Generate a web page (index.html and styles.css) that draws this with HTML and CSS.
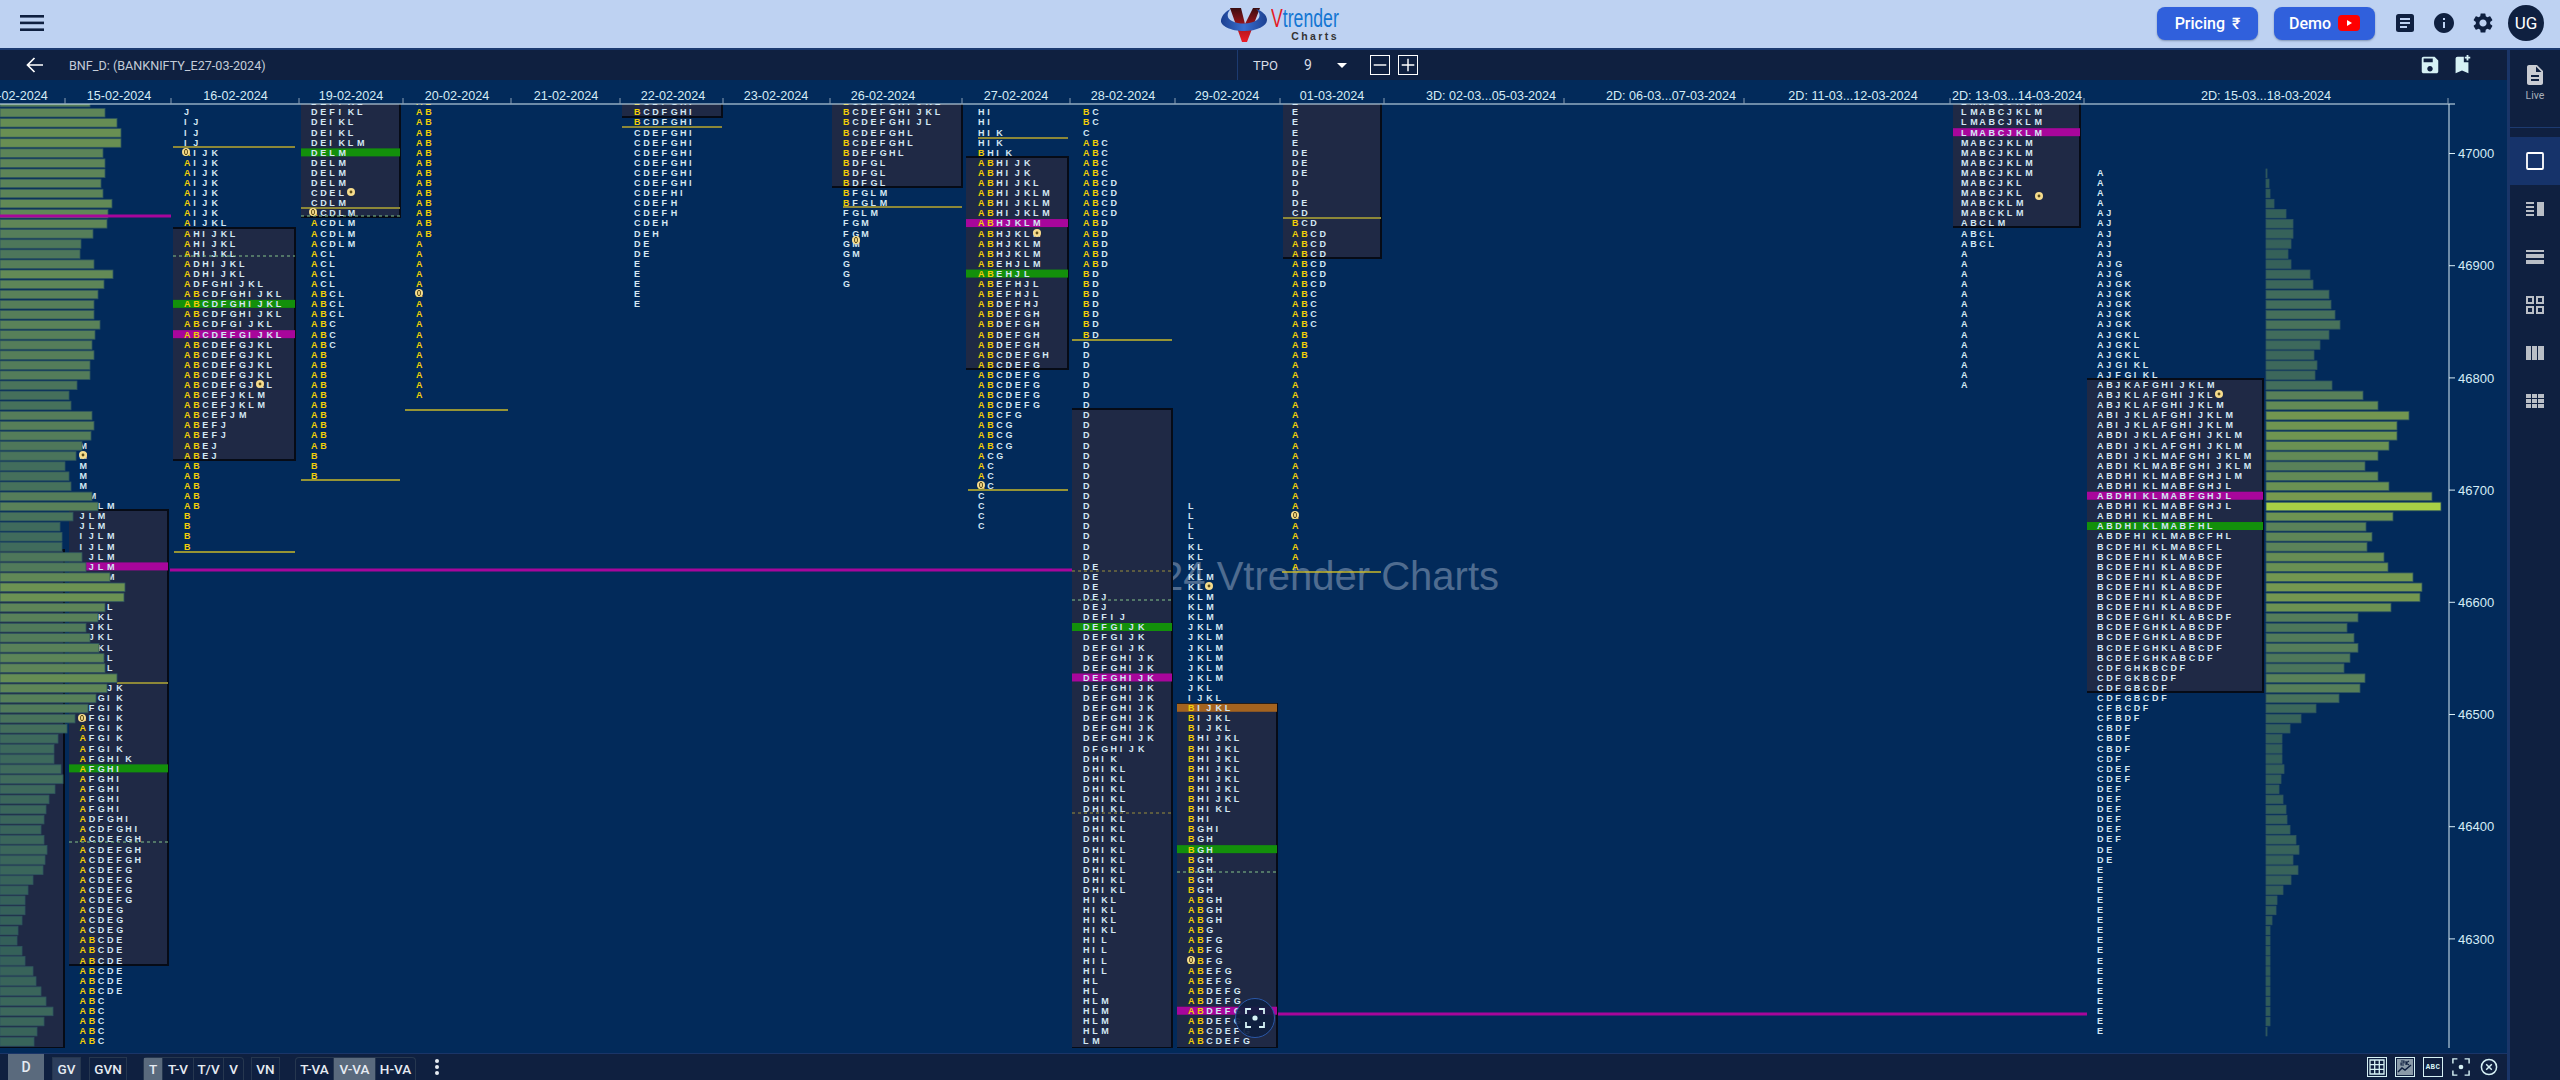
FILE: index.html
```html
<!DOCTYPE html>
<html lang="en">
<head>
<meta charset="utf-8">
<title>Vtrender Charts</title>
<link rel="stylesheet" href="styles.css">
</head>
<body>
<header class="topbar">
  <button class="burger" aria-label="Menu">
    <svg width="24" height="16" viewBox="0 0 24 16"><rect width="24" height="2.6" fill="#0f2040"/><rect y="6.6" width="24" height="2.6" fill="#0f2040"/><rect y="13.4" width="24" height="2.6" fill="#0f2040"/></svg>
  </button>
  <div class="logo">
    <svg class="logo-mark" width="50" height="38" viewBox="0 0 50 38">
      <defs>
        <linearGradient id="vg" x1="0" y1="0" x2="0" y2="1"><stop offset="0" stop-color="#3a0d10"/><stop offset="0.55" stop-color="#a8161c"/><stop offset="1" stop-color="#ee1c25"/></linearGradient>
        <linearGradient id="sg" x1="0" y1="0" x2="1" y2="0"><stop offset="0" stop-color="#1b3f90"/><stop offset="0.5" stop-color="#3a6fd0"/><stop offset="1" stop-color="#1b3f90"/></linearGradient>
      </defs>
      <path d="M10 2h11l4 16 8-16h7L27 36h-5z" fill="url(#vg)"/>
      <path d="M1 14C2 9 6 5 11 3 6 7 7 13 12 15c8 4 20 3 25-1 4-3 3-8-1-11 6 2 11 6 11 11 0 6-10 11-23 11S0 20 1 14z" fill="url(#sg)"/>
    </svg>
    <div class="logo-text">
      <div class="logo-name"><span class="logo-v">V</span>trender</div>
      <div class="logo-sub">Charts</div>
    </div>
  </div>
  <div class="top-actions">
    <button class="cta">Pricing <span class="rupee">₹</span></button>
    <button class="cta">Demo
      <svg width="22" height="16" viewBox="0 0 22 16"><rect width="22" height="16" rx="4" fill="#f00"/><path d="M9 5l5 3-5 3z" fill="#fff"/></svg>
    </button>
    <svg class="top-icon doc-icon" width="18" height="18" viewBox="0 0 18 18"><rect width="18" height="18" rx="2.5" fill="#0f2040"/><path d="M4 5h10M4 9h10M4 13h7" stroke="#bed2f2" stroke-width="1.8"/></svg>
    <svg class="top-icon" width="24" height="24" viewBox="0 0 24 24"><path fill="#0f2040" d="M12 2C6.48 2 2 6.48 2 12s4.48 10 10 10 10-4.48 10-10S17.52 2 12 2zm1 15h-2v-6h2v6zm0-8h-2V7h2v2z"/></svg>
    <svg class="top-icon" width="24" height="24" viewBox="0 0 24 24"><path fill="#0f2040" d="M19.14 12.94c.04-.3.06-.61.06-.94 0-.32-.02-.64-.07-.94l2.03-1.58a.49.49 0 0 0 .12-.61l-1.92-3.32a.488.488 0 0 0-.59-.22l-2.39.96c-.5-.38-1.03-.7-1.62-.94l-.36-2.54a.484.484 0 0 0-.48-.41h-3.84c-.24 0-.43.17-.47.41l-.36 2.54c-.59.24-1.13.57-1.62.94l-2.39-.96c-.22-.08-.47 0-.59.22L2.74 8.87c-.12.21-.08.47.12.61l2.03 1.58c-.05.3-.09.63-.09.94s.02.64.07.94l-2.03 1.58a.49.49 0 0 0-.12.61l1.92 3.32c.12.22.37.29.59.22l2.39-.96c.5.38 1.03.7 1.62.94l.36 2.54c.05.24.24.41.48.41h3.84c.24 0 .44-.17.47-.41l.36-2.54c.59-.24 1.13-.56 1.62-.94l2.39.96c.22.08.47 0 .59-.22l1.92-3.32c.12-.22.07-.47-.12-.61l-2.01-1.58zM12 15.6c-1.98 0-3.6-1.62-3.6-3.6s1.62-3.6 3.6-3.6 3.6 1.62 3.6 3.6-1.62 3.6-3.6 3.6z"/></svg>
    <div class="avatar">UG</div>
  </div>
</header>

<div class="workspace">
  <div class="chart-col">
    <div class="subbar">
      <div class="sub-left">
        <svg class="back" width="18" height="16" viewBox="0 0 18 16"><path d="M8.5 1L1.5 8l7 7M2 8h15" fill="none" stroke="#fff" stroke-width="1.7"/></svg>
        <span class="sym">BNF_D: (BANKNIFTY_E27-03-2024)</span>
      </div>
      <div class="sub-mid">
        <span class="tpo-label">TPO</span>
        <span class="tpo-val">9</span>
        <span class="caret"></span>
        <span class="sq-btn">
          <svg width="20" height="20" viewBox="0 0 20 20"><path d="M3 10h14" stroke="#fff" stroke-width="1.6"/></svg>
        </span>
        <span class="sq-btn">
          <svg width="20" height="20" viewBox="0 0 20 20"><path d="M3 10h14M10 3v14" stroke="#fff" stroke-width="1.6"/></svg>
        </span>
      </div>
      <div class="sub-right">
        <svg width="22" height="22" viewBox="0 0 24 24"><path fill="#d6f1f5" d="M17 3H5c-1.11 0-2 .9-2 2v14c0 1.1.89 2 2 2h14c1.1 0 2-.9 2-2V7l-4-4zm-5 16c-1.66 0-3-1.34-3-3s1.34-3 3-3 3 1.34 3 3-1.34 3-3 3zm3-10H5V5h10v4z"/></svg>
        <svg width="22" height="22" viewBox="0 0 24 24"><path fill="#d6f1f5" d="M5 5a2 2 0 0 1 2-2h7v6h5v12l-7-3-7 3zM19 1v2h2v2h-2v2h-2V5h-2V3h2V1z"/></svg>
      </div>
    </div>

    <div class="chart-wrap">
      <svg id="chart" class="chart" viewBox="0 80 2507 973" width="2507" height="973"></svg>
      <button class="fab" aria-label="Focus">
        <svg width="20" height="20" viewBox="0 0 20 20"><path d="M1 6V1h5M14 1h5v5M19 14v5h-5M6 19H1v-5" fill="none" stroke="#d6f1f5" stroke-width="1.8"/><circle cx="10" cy="10" r="2.6" fill="#d6f1f5"/></svg>
      </button>
    </div>

    <footer class="toolbar">
      <button class="tb tb-d">D</button>
      <button class="tb tb-gv">GV</button>
      <button class="tb tb-gvn">GVN</button>
      <div class="tb-group">
        <button class="seg seg-t on">T</button>
        <button class="seg seg-tv">T-V</button>
        <button class="seg seg-tsv">T/V</button>
        <button class="seg seg-v">V</button>
      </div>
      <button class="tb tb-vn">VN</button>
      <div class="tb-group tb-group-va">
        <button class="seg seg-va">T-VA</button>
        <button class="seg seg-vva on">V-VA</button>
        <button class="seg seg-hva">H-VA</button>
      </div>
      <svg class="dots" width="6" height="18" viewBox="0 0 6 18"><circle cx="3" cy="3" r="2"/><circle cx="3" cy="9" r="2"/><circle cx="3" cy="15" r="2"/></svg>
      <div class="tb-right">
        <span class="tool-box"><svg width="16" height="16" viewBox="0 0 16 16"><path d="M1 1h14v14H1zM1 5.7h14M1 10.3h14M5.7 1v14M10.3 1v14" fill="none" stroke="#d6f1f5" stroke-width="1.3"/></svg></span>
        <span class="tool-box"><svg width="16" height="16" viewBox="0 0 16 16"><rect width="16" height="16" fill="#8a9aa8"/><path d="M1 13l4-4 3 2 6-5" fill="none" stroke="#0f2040" stroke-width="1.5"/><path d="M4 2h3v2H4v2h3M9 2v4M12 2l-3 2 3 2" fill="none" stroke="#0f2040" stroke-width="1.1"/></svg></span>
        <span class="tool-box abc">ABC</span>
        <svg class="tool-plain" width="18" height="18" viewBox="0 0 20 20"><path d="M1 6V1h5M14 1h5v5M19 14v5h-5M6 19H1v-5" fill="none" stroke="#d6f1f5" stroke-width="1.6"/><circle cx="10" cy="10" r="2.6" fill="#d6f1f5"/></svg>
        <svg class="tool-plain" width="18" height="18" viewBox="0 0 18 18"><circle cx="9" cy="9" r="7.6" fill="none" stroke="#d6f1f5" stroke-width="1.5"/><path d="M6.2 6.2l5.6 5.6M11.8 6.2l-5.6 5.6" stroke="#d6f1f5" stroke-width="1.5"/></svg>
      </div>
    </footer>
  </div>

  <aside class="side">
    <div class="side-live">
      <svg width="24" height="24" viewBox="0 0 24 24"><path fill="#c9ccd3" d="M14 2H6c-1.1 0-1.99.9-1.99 2L4 20c0 1.1.89 2 1.99 2H18c1.1 0 2-.9 2-2V8l-6-6zm2 16H8v-2h8v2zm0-4H8v-2h8v2zm-3-5V3.5L18.5 9H13z"/></svg>
      <span>Live</span>
    </div>
    <div class="side-item selected"><svg width="18" height="18" viewBox="0 0 18 18"><rect x="1" y="1" width="16" height="16" rx="1" fill="none" stroke="#fff" stroke-width="1.8"/></svg></div>
    <div class="side-item"><svg width="18" height="14" viewBox="0 0 18 14"><path fill="#b9bec6" d="M0 0h8v2H0zM0 4h8v2H0zM0 8h8v2H0zM0 12h8v2H0zM11 0h7v14h-7z"/></svg></div>
    <div class="side-item"><svg width="18" height="14" viewBox="0 0 18 14"><path fill="#b9bec6" d="M0 0h18v2H0zM0 4h18v4H0zM0 10h18v4H0z"/></svg></div>
    <div class="side-item"><svg width="18" height="18" viewBox="0 0 18 18"><path fill="none" stroke="#b9bec6" stroke-width="2" d="M1 1h6v6H1zM11 1h6v6h-6zM1 11h6v6H1zM11 11h6v6h-6z"/></svg></div>
    <div class="side-item"><svg width="18" height="14" viewBox="0 0 18 14"><path fill="#b9bec6" d="M0 0h5v14H0zM6 0h5v14H6zM12 0h6v14h-6z"/></svg></div>
    <div class="side-item"><svg width="18" height="14" viewBox="0 0 18 14"><path fill="#b9bec6" d="M0 0h5v4H0zM6 0h5v4H6zM12 0h6v4h-6zM0 5h5v4H0zM6 5h5v4H6zM12 5h6v4h-6zM0 10h5v4H0zM6 10h5v4H6zM12 10h6v4h-6z"/></svg></div>
  </aside>
</div>
<script src="script.js"></script>
</body>
</html>
```

FILE: styles.css
```css
* { box-sizing: border-box; }
html, body { margin: 0; height: 100%; overflow: hidden; background: #0f2040; }
body { width: 2560px; height: 1080px; display: flex; flex-direction: column; font-family: "Roboto", "Liberation Sans", sans-serif; }
button { font: inherit; border: 0; background: none; color: inherit; padding: 0; }

.topbar { height: 50px; flex: none; display: grid; grid-template-columns: 1fr auto 1fr; align-items: center; background: #bed2f2; border-bottom: 2px solid #1c3a70; padding-left: 20px; }
.burger { width: 24px; height: 16px; justify-self: start; margin-top: -2px; display: flex; }
.logo { display: flex; align-items: flex-start; height: 48px; padding-top: 6px; margin-left: -20px; }
.logo-mark { margin-right: 1px; }
.logo-text { width: 69px; display: flex; flex-direction: column; align-items: flex-end; }
.logo-name { width: 69px; white-space: nowrap; font-family: "Liberation Sans", sans-serif; font-size: 26px; line-height: 24px; color: #1476d2; transform: scaleX(.68); transform-origin: left center; }
.logo-v { color: #e51c25; }
.logo-sub { font-family: "Liberation Sans", sans-serif; font-weight: 700; font-size: 10.5px; letter-spacing: 2.4px; color: #333; line-height: 10px; margin-top: 1px; margin-right: 1px; white-space: nowrap; }
.top-actions { display: flex; align-items: center; justify-content: flex-end; margin-top: -2px; }
.cta { width: 101px; height: 33px; border-radius: 8px; background: #3060dc; color: #fff; font-size: 16px; font-weight: 500; display: flex; align-items: center; justify-content: center; gap: 7px; box-shadow: 0 1px 2px rgba(15,32,64,.35); margin-right: 16px; }
.cta + .cta { margin-right: 21px; }
.rupee { font-size: 16px; }
.top-icon { margin-right: 15px; }
.doc-icon { margin-right: 18px; }
.avatar { width: 36px; height: 36px; border-radius: 50%; background: #0f2040; color: #fff; font-size: 17px; display: flex; align-items: center; justify-content: center; margin-right: 16px; margin-left: -2px; }

.workspace { flex: 1; display: flex; min-height: 0; }
.chart-col { width: 2507px; flex: none; display: flex; flex-direction: column; }
.side { flex: 1; background: #0f2040; border-left: 3px solid #1a3568; }

.subbar { height: 30px; flex: none; display: flex; align-items: center; background: #0f2040; color: #d8dde6; font-size: 12.5px; }
.sub-left { width: 1238px; height: 100%; display: flex; align-items: center; border-right: 1px solid #1c3a70; padding-left: 26px; }
.sym { margin-left: 25px; color: #c4ccd8; font-size: 12.6px; }
.sub-mid { display: flex; align-items: center; padding-left: 15px; }
.tpo-label { width: 51px; font-size: 13px; }
.tpo-val { width: 33px; font-size: 14px; }
.caret { width: 0; height: 0; border-left: 5px solid transparent; border-right: 5px solid transparent; border-top: 5px solid #fff; margin-right: 23px; }
.sq-btn { width: 20px; height: 20px; border: 1px solid #fff; margin-right: 8px; display: flex; align-items: center; justify-content: center; overflow: hidden; }
.sub-right { margin-left: auto; display: flex; gap: 10px; padding-right: 34px; }

.chart-wrap { position: relative; flex: 1; min-height: 0; background: #022a5a; }
.chart { display: block; }
.fab { position: absolute; left: 1235px; top: 918px; width: 40px; height: 40px; border-radius: 50%; background: rgba(15,32,64,.92); border: 1px solid #2a58a8; display: flex; align-items: center; justify-content: center; }

.tick-label { font-family: "Liberation Sans", sans-serif; font-size: 12.6px; fill: #d5ecf6; }
.date-label { text-anchor: middle; }
.price-label { font-size: 13px; }
.wm { font-family: "Liberation Sans", sans-serif; font-size: 40px; fill: #4f6c90; text-anchor: end; }
.tpo { font-family: "Liberation Sans", sans-serif; font-weight: 700; font-size: 9px; fill: #d4e8f4; }
.tpo .y { fill: #f2cf07; }
.va-box { fill: #1f2945; }
.va-edge { fill: none; stroke: #060b16; stroke-width: 2; }
.hl-m { fill: #a8069b; }
.hl-g { fill: #13900b; }
.hl-o { fill: #a4631f; }
.line-m { stroke: #a8069b; stroke-width: 3; }
.line-y { stroke: #c9b92a; stroke-width: 1.6; }
.line-o { stroke: #8d8838; stroke-width: 2; }
.dash-y { stroke: #9a8f3c; stroke-width: 1; stroke-dasharray: 3 3; }
.dash-g { stroke: #86c48a; stroke-width: 1; stroke-dasharray: 3 3; }
.axis { stroke: #d8ecf5; stroke-width: 1; }
.tickm { stroke: #8a9fb5; stroke-width: 1; }
.bar { stroke: #2f5560; stroke-width: .8; }
.dot-bg { fill: #f6dc8c; }
.dot-in { fill: #5d4d1a; }

.toolbar { height: 27px; flex: none; display: flex; align-items: flex-end; background: #0f2040; border-top: 1px solid #1a3568; color: #e6ebf2; font-size: 13.5px; font-weight: 500; padding-left: 8px; }
.tb { height: 23px; display: flex; align-items: center; justify-content: center; border: 1px solid #26374f; border-bottom: 0; }
.tb-d { width: 36px; height: 26px; background: #5a6a7d; border: 0; font-size: 14px; margin-right: 8px; }
.tb-gv { width: 29px; background: #2c3e5c; margin-right: 8px; }
.tb-gvn { width: 38px; margin-right: 16px; }
.tb-group { display: flex; height: 23px; border: 1px solid #26374f; border-bottom: 0; border-radius: 4px 4px 0 0; margin-right: 7px; }
.tb-group-va { margin-left: 15px; margin-right: 18px; }
.seg { display: flex; align-items: center; justify-content: center; height: 100%; border-right: 1px solid #26374f; }
.seg:last-child { border-right: 0; }
.seg.on { background: #5a6a7d; }
.seg-t { width: 19px; }
.seg-tv { width: 31px; }
.seg-tsv { width: 30px; }
.seg-v { width: 19px; }
.seg-va { width: 38px; }
.seg-vva { width: 42px; }
.seg-hva { width: 39px; }
.tb-vn { width: 29px; }
.dots { fill: #e6ebf2; align-self: center; }
.tb-right { margin-left: auto; display: flex; align-items: center; align-self: center; padding-right: 9px; }
.tool-box { width: 20px; height: 20px; border: 1px solid #d6f1f5; margin-right: 8px; display: flex; align-items: center; justify-content: center; }
.abc { font-family: "Liberation Mono", monospace; font-size: 7.5px; font-weight: 700; color: #d6f1f5; letter-spacing: .4px; margin-right: 9px; }
.tool-plain { margin-right: 10px; }
.tool-plain:last-child { margin-right: 0; }

.side-live { height: 78px; border-bottom: 1px solid #1c3a70; display: flex; flex-direction: column; align-items: center; padding-top: 13px; gap: 2px; color: #a8afba; font-size: 10.5px; }
.side-item { height: 48px; display: flex; align-items: center; justify-content: center; }
.side-item.selected { background: #16336a; margin-top: 9px; }
```

FILE: script.js
```js
(function () {
  var NS = 'http://www.w3.org/2000/svg';
  var svg = document.getElementById('chart');
  var Y0 = 112, PITCH = 10.098, SLOT = 9.17;
  function cy(k) { return Y0 + k * PITCH; }
  function el(tag, attrs, parent) {
    var e = document.createElementNS(NS, tag);
    for (var a in attrs) e.setAttribute(a, attrs[a]);
    (parent || svg).appendChild(e);
    return e;
  }

  /* clip region under the date axis */
  var defs = el('defs', {});
  var clip = el('clipPath', { id: 'plot' }, defs);
  el('rect', { x: 0, y: 104, width: 2449, height: 944 }, clip);

  /* value-area boxes: x1, y1, x2, y2 */
  var boxes = [
    [0, 550, 64, 1048], [69, 510, 168, 965], [173, 228, 295, 460], [301, 100, 400, 217],
    [622, 100, 722, 117], [832, 100, 962, 187], [966, 157, 1068, 369], [1072, 409, 1172, 1048],
    [1177, 704, 1277, 1048], [1283, 100, 1381, 258], [1953, 100, 2080, 227], [2087, 379, 2263, 692]
  ];

  /* TPO columns */
  var columns = [
    { x: 79.5, k: 33, y: 'AB', rows: ['M*5', ' M', 'IJLM', 'JLM*2', 'IJLM*3', 'IJLM*2', 'IJLM*2', 'IJKL*6', 'IJKL*2', 'AFGJK', 'AFGIK*6', 'AFGHIK', 'AFGHI*5', 'ADFGHI', 'ACDFGHI', 'ACDEFGH*3', 'ACDEFG*4', 'ACDEG*3', 'ABCDE*6', 'ABC*5'] },
    { x: 184, k: 0, y: 'AB', rows: ['J', 'IJ*3', 'AIJK*7', 'AIJKL', 'AHIJKL*3', 'ADHIJKL*2', 'ADFGHIJKL', 'ABCDFGHIJKL*3', 'ABCDFGIJKL', 'ABCDEFGIJKL', 'ABCDEFGJKL*5', 'ABCEFJKLM*2', 'ABCEFJM', 'ABEFJ*2', 'ABEJ*2', 'AB*5', 'B*4'] },
    { x: 311, k: -1, y: 'AB', rows: ['DEFIKL', 'DEFIKL', 'DEIKL*2', 'DEIKLM', 'DELM*4', 'CDEL', 'CDLM', 'ACDLM*4', 'ACL*4', 'ABCL*3', 'ABC*3', 'AB*10', 'B*3'] },
    { x: 416, k: -1, y: 'AB', rows: ['AB*14', 'A*16'] },
    { x: 634, k: -1, y: 'AB', rows: ['BCDFGHI*3', 'CDEFGHI*6', 'CDEFHI', 'CDEFH*2', 'CDEH', 'DEH', 'DE*2', 'E*5'] },
    { x: 843, k: -1, y: 'AB', rows: ['BCDEFGHIJKL*2', 'BCDEFGHIJL', 'BCDEFGHL*2', 'BDEFGHL', 'BDFGL*3', 'BFGLM*2', 'FGLM', 'FGM*2', 'GM*2', 'G*3'] },
    { x: 978, k: 0, y: 'AB', rows: ['HI*2', 'HIK*2', 'BHIK', 'ABHIJK*2', 'ABHIJKL', 'ABHIJKLM*3', 'ABHJKLM*4', 'ABEHJLM', 'ABEHJL', 'ABEFHJL*2', 'ABDEFHJ', 'ABDEFGH*4', 'ABCDEFGH', 'ABCDEFG*5', 'ABCFG', 'ABCG*3', 'ACG', 'AC*3', 'C*4'] },
    { x: 1083, k: 0, y: 'AB', rows: ['BC*2', 'C', 'ABC*4', 'ABCD*4', 'ABD*5', 'BD*7', 'D*22', 'DE*3', 'DEJ*2', 'DEFIJ', 'DEFGIJK*3', 'DEFGHIJK*9', 'DFGHIJK', 'DHIK', 'DHIKL*13', 'HIKL*4', 'HIL*4', 'HL*2', 'HLM*4', 'LM'] },
    { x: 1188, k: 39, y: 'AB', rows: ['L*4', 'KL*3', 'KLM', 'KL', 'KLM*3', 'JKLM*6', 'JKL', 'IJKL', 'BIJKL*3', 'BHIJKL*7', 'BHIKL', 'BHI', 'BGHI', 'BGH*6', 'ABGH*3', 'ABG', 'ABFG*3', 'ABEFG*2', 'ABDEFG*4', 'ABCDEFG*2'] },
    { x: 1292, k: -1, y: 'AB', rows: ['E*5', 'DE*3', 'D*2', 'DE', 'CD', 'BCD', 'ABCD*6', 'ABC*4', 'AB*3', 'A*21'] },
    { x: 1961, k: -1, y: '', rows: ['LMABCJKLM*4', 'MABCJKLM*4', 'MABCJKL*2', 'MABCKLM*2', 'ABCLM', 'ABCL*2', 'A*14'] },
    { x: 2097, k: 6, y: '', rows: ['A*4', 'AJ*5', 'AJG*2', 'AJGK*5', 'AJGKL*3', 'AJGIKL', 'AJFGIKL', 'ABJKAFGHIJKLM', 'ABJKLAFGHIJKL', 'ABJKLAFGHIJKLM', 'ABIJKLAFGHIJKLM*2', 'ABDIJKLAFGHIJKLM*2', 'ABDIJKLMAFGHIJKLM', 'ABDIKLMABFGHIJKLM', 'ABDHIKLMABFGHJLM', 'ABDHIKLMABFGHJL*3', 'ABDHIKLMABFHL*2', 'ABDFHIKLMABCFHL', 'BCDFHIKLMABCFL', 'BCDEFHIKLMABCF', 'BCDEFHIKLABCDF*5', 'BCDEFGHIKLABCDF', 'BCDEFGHKLABCDF*3', 'BCDEFGHKABCDF', 'CDFGHKBCDF', 'CDFGKBCDF', 'CDFGBCDF*2', 'CFBCDF', 'CFBDF', 'CBDF*3', 'CDF', 'CDEF*2', 'DEF*6', 'DE*2', 'E*17'] }
  ];

  /* highlighted rows: type, x1, x2, k */
  var highlights = [
    ['m', 86, 168, 45], ['g', 69, 168, 65],
    ['g', 173, 295, 19], ['m', 173, 295, 22],
    ['g', 301, 400, 4],
    ['m', 966, 1068, 11], ['g', 966, 1068, 16],
    ['g', 1072, 1172, 51], ['m', 1072, 1172, 56],
    ['o', 1177, 1277, 59], ['g', 1177, 1277, 73], ['m', 1177, 1277, 89],
    ['m', 1953, 2080, 2],
    ['m', 2087, 2263, 38], ['g', 2087, 2263, 41]
  ];

  /* lines: class, x1, x2, y */
  var lines = [
    ['line-o', 173, 295, 147], ['line-o', 301, 400, 208], ['line-o', 117, 168, 683],
    ['line-y', 174, 295, 552], ['line-y', 301, 400, 480], ['line-y', 405, 508, 410],
    ['line-o', 622, 722, 127], ['line-o', 843, 962, 207], ['line-o', 978, 1068, 138],
    ['line-y', 968, 1068, 490], ['line-y', 1072, 1172, 340], ['line-o', 1283, 1381, 218],
    ['line-y', 1282, 1381, 572],
    ['dash-g', 173, 295, 256], ['dash-g', 301, 400, 216], ['dash-g', 69, 168, 842],
    ['dash-y', 1072, 1172, 571], ['dash-g', 1072, 1172, 600], ['dash-y', 1072, 1172, 813],
    ['dash-g', 1177, 1277, 872]
  ];

  /* left volume profile, widths in px from row k=-1 */
  var leftBars = [90, 105, 117, 121, 121, 103, 105, 105, 101, 103, 112, 108, 107, 93, 81, 80, 94, 113, 104, 98, 94, 94, 100, 95, 92, 94, 90, 90, 77, 69, 71, 92, 94, 91, 82, 76, 65, 69, 71, 92, 98, 73, 60, 62, 62, 82, 86, 110, 125, 124, 105, 98, 86, 90, 99, 104, 105, 117, 107, 96, 88, 75, 67, 58, 54, 54, 61, 63, 55, 49, 46, 44, 41, 44, 47, 45, 43, 33, 28, 25, 25, 22, 18, 17, 22, 25, 33, 36, 41, 46, 53, 44, 37, 34];

  /* right volume profile, widths from row k=6 */
  var rightBars = [1, 3, 4, 8, 20, 27, 27, 25, 22, 25, 44, 47, 63, 65, 69, 74, 63, 54, 48, 51, 49, 66, 97, 112, 143, 131, 131, 123, 112, 99, 112, 123, 166, 175, 127, 100, 106, 101, 118, 122, 147, 156, 154, 125, 92, 81, 88, 92, 84, 78, 99, 94, 73, 50, 35, 24, 16, 16, 16, 18, 15, 13, 17, 20, 21, 24, 30, 33, 27, 32, 25, 17, 11, 10, 6, 4, 4, 4, 4, 4, 4, 4, 4, 4, 4, 1];

  /* session markers: kind, x, y */
  var dots = [
    ['o', 186, 152], ['o', 313, 212], ['c', 351, 192], ['o', 419, 293], ['o', 82, 718], ['c', 83, 455],
    ['c', 260, 384], ['c', 1209, 586], ['o', 1191, 960], ['o', 1295, 515], ['c', 2219, 394],
    ['o', 981, 485], ['c', 1037, 233], ['o', 856, 240], ['c', 2039, 196]
  ];

  /* watermark */
  el('text', { x: 1499, y: 590, 'class': 'wm' }).textContent = '© 2024 Vtrender Charts';

  /* plot group */
  var plot = el('g', { 'clip-path': 'url(#plot)' });

  boxes.forEach(function (b) {
    el('rect', { x: b[0], y: b[1], width: b[2] - b[0], height: b[3] - b[1], 'class': 'va-box' }, plot);
    el('path', { d: 'M' + b[0] + ' ' + b[1] + 'H' + b[2] + 'V' + b[3] + 'H' + b[0], 'class': 'va-edge' }, plot);
  });
  highlights.forEach(function (h) {
    el('rect', { x: h[1], y: cy(h[3]) - 4, width: h[2] - h[1], height: 8, 'class': 'hl-' + h[0] }, plot);
  });

  function addRow(col, k, str) {
    var t = el('text', { y: (cy(k) + 3.3).toFixed(1), 'class': 'tpo' }, plot);
    var runYellow = null, xs = [], txt = '';
    function flush() {
      if (!txt) return;
      var s = el('tspan', { x: xs.join(' ') }, t);
      if (runYellow) s.setAttribute('class', 'y');
      s.textContent = txt;
      xs = []; txt = '';
    }
    for (var i = 0; i < str.length; i++) {
      var ch = str[i];
      if (ch === ' ') continue;
      var isY = col.y.indexOf(ch) >= 0;
      if (isY !== runYellow) { flush(); runYellow = isY; }
      xs.push((col.x + i * SLOT).toFixed(1));
      txt += ch;
    }
    flush();
  }
  columns.forEach(function (col) {
    var k = col.k;
    col.rows.forEach(function (r) {
      var p = r.split('*'), n = p[1] ? +p[1] : 1;
      for (var i = 0; i < n; i++) addRow(col, k++, p[0]);
    });
  });

  lines.forEach(function (l) {
    el('line', { x1: l[1], x2: l[2], y1: l[3], y2: l[3], 'class': l[0] }, plot);
  });

  function barColor(w) {
    var stops = [[0, [47, 91, 88]], [60, [63, 106, 92]], [100, [90, 130, 89]], [130, [111, 149, 81]], [170, [120, 153, 79]]];
    if (w >= 175) return '#a8d045';
    for (var i = 1; i < stops.length; i++) {
      if (w <= stops[i][0]) {
        var a = stops[i - 1], b = stops[i], t = (w - a[0]) / (b[0] - a[0]);
        return 'rgb(' + a[1].map(function (c, j) { return Math.round(c + (b[1][j] - c) * t); }).join(',') + ')';
      }
    }
    return 'rgb(120,153,79)';
  }
  leftBars.forEach(function (w, i) {
    var k = i - 1;
    el('rect', { x: 0, y: (cy(k) - 3.6).toFixed(1), width: w, height: 8.6, fill: barColor(w), 'class': 'bar' }, plot);
  });
  rightBars.forEach(function (w, i) {
    var k = i + 6;
    el('rect', { x: 2266, y: (cy(k) - 3.6).toFixed(1), width: w, height: 8.6, fill: barColor(w), 'class': 'bar' }, plot);
  });

  /* point-of-control extensions */
  [[0, 171, 216], [170, 1072, 570], [1278, 2087, 1014]].forEach(function (l) {
    el('line', { x1: l[0], x2: l[1], y1: l[2], y2: l[2], 'class': 'line-m' }, plot);
  });

  dots.forEach(function (d) {
    el('circle', { cx: d[1], cy: d[2], r: 4, 'class': 'dot-bg' }, plot);
    if (d[0] === 'o') el('ellipse', { cx: d[1], cy: d[2], rx: 1.5, ry: 2.8, fill: 'none', stroke: '#5d4d1a', 'stroke-width': 1 }, plot);
    else el('circle', { cx: d[1], cy: d[2], r: 1.4, 'class': 'dot-in' }, plot);
  });

  /* axes */
  el('line', { x1: 0, x2: 2455, y1: 104, y2: 104, 'class': 'axis' });
  el('line', { x1: 2449, x2: 2449, y1: 104, y2: 1048, 'class': 'axis' });
  [65, 171, 299, 403, 511, 620, 723, 830, 962, 1070, 1175, 1280, 1384, 1564, 1744, 1950, 2084, 2448].forEach(function (x) {
    el('line', { x1: x, x2: x, y1: 98, y2: 104, 'class': 'tickm' });
  });
  [['14-02-2024', 15.5], ['15-02-2024', 119], ['16-02-2024', 235.5], ['19-02-2024', 351], ['20-02-2024', 457], ['21-02-2024', 566],
   ['22-02-2024', 673], ['23-02-2024', 776], ['26-02-2024', 883], ['27-02-2024', 1016], ['28-02-2024', 1123], ['29-02-2024', 1227], ['01-03-2024', 1332],
   ['3D: 02-03...05-03-2024', 1491], ['2D: 06-03...07-03-2024', 1671], ['2D: 11-03...12-03-2024', 1853], ['2D: 13-03...14-03-2024', 2017], ['2D: 15-03...18-03-2024', 2266]
  ].forEach(function (d) {
    el('text', { x: d[1], y: 99.5, 'class': 'tick-label date-label' }).textContent = d[0];
  });
  for (var i = 0; i < 8; i++) {
    var yy = 153.5 + 112.2 * i;
    el('line', { x1: 2449, x2: 2455, y1: yy, y2: yy, 'class': 'axis' });
    el('text', { x: 2458, y: (yy + 4.7).toFixed(1), 'class': 'tick-label price-label' }).textContent = String(47000 - 100 * i);
  }
})();
```
